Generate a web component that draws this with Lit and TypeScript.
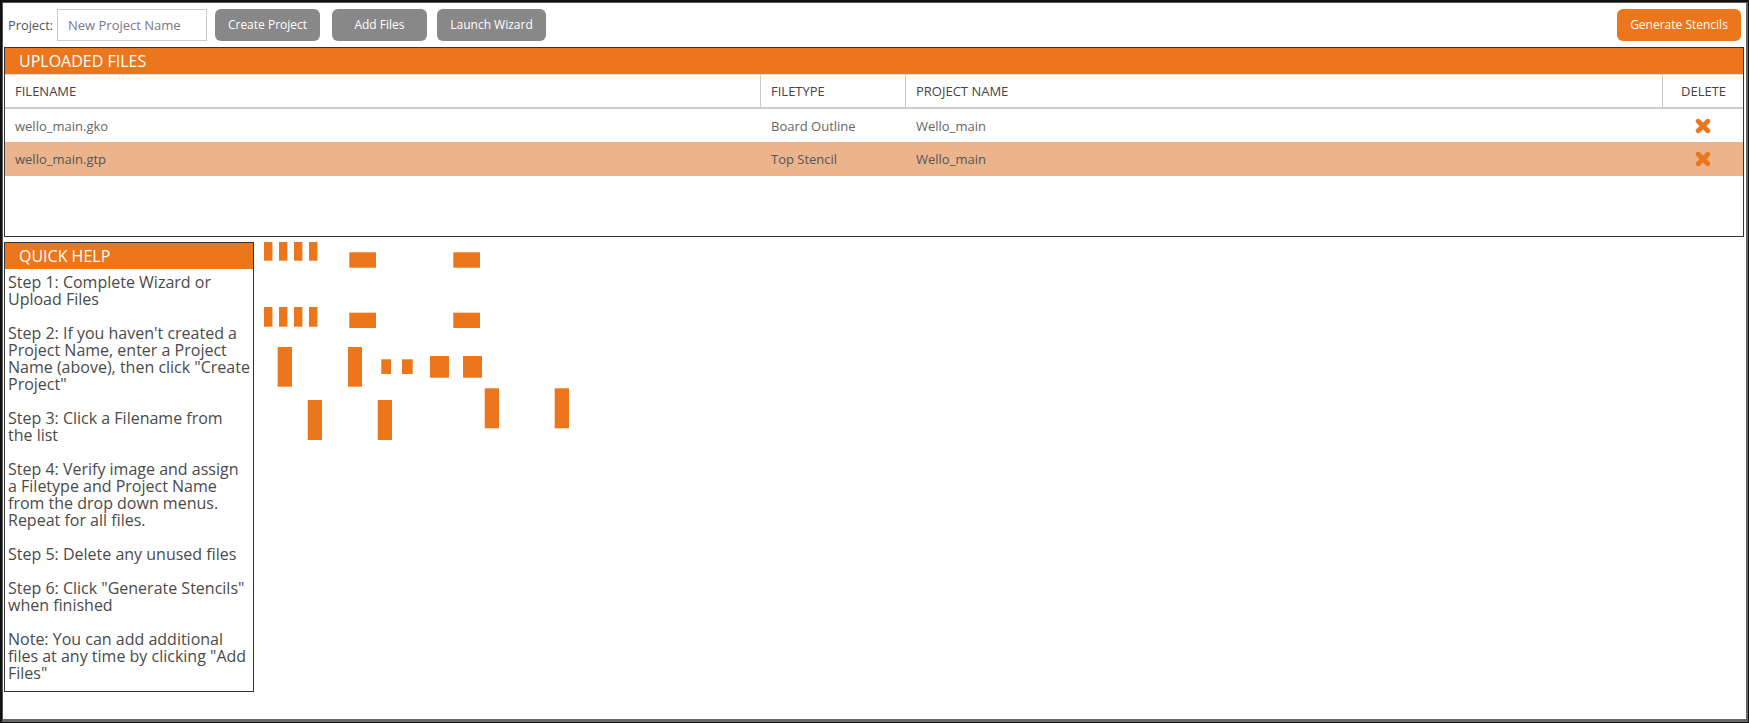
import { LitElement, html, css, svg } from "lit";
import { customElement } from "lit/decorators.js";

const pads: [number, number, number, number][] = [
  [264, 242, 8.4, 18.7], [279, 242, 8.4, 18.7], [294, 242, 8.4, 18.7], [309, 242, 8.4, 18.7],
  [349.3, 252.3, 26.7, 15.4], [453.3, 252.3, 26.7, 15.4],
  [264, 307, 8.4, 19.7], [279, 307, 8.4, 19.7], [294, 307, 8.4, 19.7], [309, 307, 8.4, 19.7],
  [349.3, 312.7, 26.7, 15.3], [453.3, 312.7, 26.7, 15.3],
  [277.7, 347, 14.3, 39.7], [348, 347, 14, 39.7],
  [381.3, 359.3, 9.7, 14.7], [402, 359.3, 10.7, 14.7],
  [430, 356, 19, 21.7], [463, 356, 19, 21.7],
  [484.7, 388.3, 14.3, 40], [554.7, 388.3, 14.3, 40],
  [307.7, 400, 14.3, 40], [377.7, 400, 14.3, 40],
];

@customElement("app-root")
export class AppRoot extends LitElement {
  static styles = css`
    :host {
      display: block;
      height: 723px;
      box-sizing: border-box;
      border-style: solid;
      border-color: #111;
      border-width: 2px 1px 1px 2px;
      padding: 1px 2px 3px 1px;
      box-shadow: inset 1px 1px 0 #555, inset -2px -3px 0 #666;
      font-family: "Open Sans", sans-serif;
      color: #444;
      background: #fff;
      overflow: hidden;
    }
    .toolbar {
      display: flex;
      align-items: center;
      height: 32px;
      margin-top: 6px;
      padding: 0 5px 0 5px;
    }
    .label { font-size: 12.8px; width: 49px; color: #555; }
    input {
      box-sizing: border-box;
      width: 150px;
      height: 32px;
      border: 1px solid #ccc;
      padding: 0 10px;
      font: 13px "Open Sans", sans-serif;
      margin-right: 8px;
    }
    input::placeholder { color: #778; opacity: 1; }
    button {
      height: 32px;
      border: none;
      border-radius: 6px;
      background: #888;
      color: #fff;
      font: 400 12px "Open Sans", sans-serif;
      padding: 0 0 2px;
    }
    .create { width: 105px; margin-right: 12px; }
    .add { width: 95px; margin-right: 10px; }
    .wizard { width: 109px; }
    .generate { width: 124px; margin-left: auto; background: #ec761b; }
    .panel { border: 1px solid #333; box-sizing: border-box; }
    .files { margin: 6px 2px 0 1px; height: 190px; }
    .title {
      background: #ec761b;
      color: #fff;
      font-size: 16px;
      height: 26px;
      line-height: 26px;
      padding-left: 14px;
    }
    .cols {
      display: grid;
      grid-template-columns: 755px 145px 757px 1fr;
    }
    .head > div {
      box-sizing: border-box;
      height: 35px;
      border-top: 1px solid #ddd;
      border-bottom: 2px solid #ccc;
      border-left: 1px solid #ccc;
      font-size: 13px;
      color: #444;
      line-height: 32px;
      padding-left: 10px;
    }
    .head > div:first-child { border-left: none; }
    .head > .del { padding-left: 1px; text-align: center; }
    .row > div {
      height: 33.4px;
      line-height: 34px;
      font-size: 13px;
      color: #666;
      padding-left: 10px;
    }
    .row > div:nth-child(2), .row > div:nth-child(3) { padding-left: 11px; }
    .row.sel { background: #ebb48c; }
    .row.sel > div { color: #555; }
    .row > .del {
      padding: 0 0 0 1px;
      display: flex;
      align-items: center;
      justify-content: center;
    }
    .del svg { width: 16px; height: 16px; display: block; }
    .lower { position: relative; }
    .help { margin: 5px 0 0 1px; width: 250px; height: 450px; }
    .help .body {
      padding: 5px 0 0 3px;
      font-size: 16px;
      line-height: 17px;
      color: #4a4a4a;
    }
    .help p { margin: 0 0 17px; }
    .pads { position: absolute; left: -3px; top: -242px; width: 1749px; height: 723px; pointer-events: none; }
    .pads rect { fill: #ec761b; }
  `;

  private cross() {
    return html`<svg viewBox="0 0 16 16"><path d="M3.2 3.2 L12.8 12.8 M12.8 3.2 L3.2 12.8" stroke="#ec761b" stroke-width="4.8" stroke-linecap="round" fill="none"/></svg>`;
  }

  private row(name: string, type: string, sel = false) {
    return html`<div class="cols row ${sel ? "sel" : ""}">
      <div>${name}</div><div>${type}</div><div>Wello_main</div>
      <div class="del">${this.cross()}</div>
    </div>`;
  }

  render() {
    return html`
      <div class="toolbar">
        <span class="label">Project:</span>
        <input placeholder="New Project Name" />
        <button class="create">Create Project</button>
        <button class="add">Add Files</button>
        <button class="wizard">Launch Wizard</button>
        <button class="generate">Generate Stencils</button>
      </div>
      <div class="panel files">
        <div class="title">UPLOADED FILES</div>
        <div class="cols head">
          <div>FILENAME</div><div>FILETYPE</div><div>PROJECT NAME</div><div class="del">DELETE</div>
        </div>
        ${this.row("wello_main.gko", "Board Outline")}
        ${this.row("wello_main.gtp", "Top Stencil", true)}
      </div>
      <div class="lower">
        <div class="panel help">
          <div class="title">QUICK HELP</div>
          <div class="body">
            <p>Step 1: Complete Wizard or<br />Upload Files</p>
            <p>Step 2: If you haven't created a<br />Project Name, enter a Project<br />Name (above), then click "Create<br />Project"</p>
            <p>Step 3: Click a Filename from<br />the list</p>
            <p>Step 4: Verify image and assign<br />a Filetype and Project Name<br />from the drop down menus.<br />Repeat for all files.</p>
            <p>Step 5: Delete any unused files</p>
            <p>Step 6: Click "Generate Stencils"<br />when finished</p>
            <p>Note: You can add additional<br />files at any time by clicking "Add<br />Files"</p>
          </div>
        </div>
        <svg class="pads" viewBox="0 0 1749 723">
          ${pads.map(([x, y, w, h]) => svg`<rect x=${x} y=${y} width=${w} height=${h}></rect>`)}
        </svg>
      </div>
    `;
  }
}
